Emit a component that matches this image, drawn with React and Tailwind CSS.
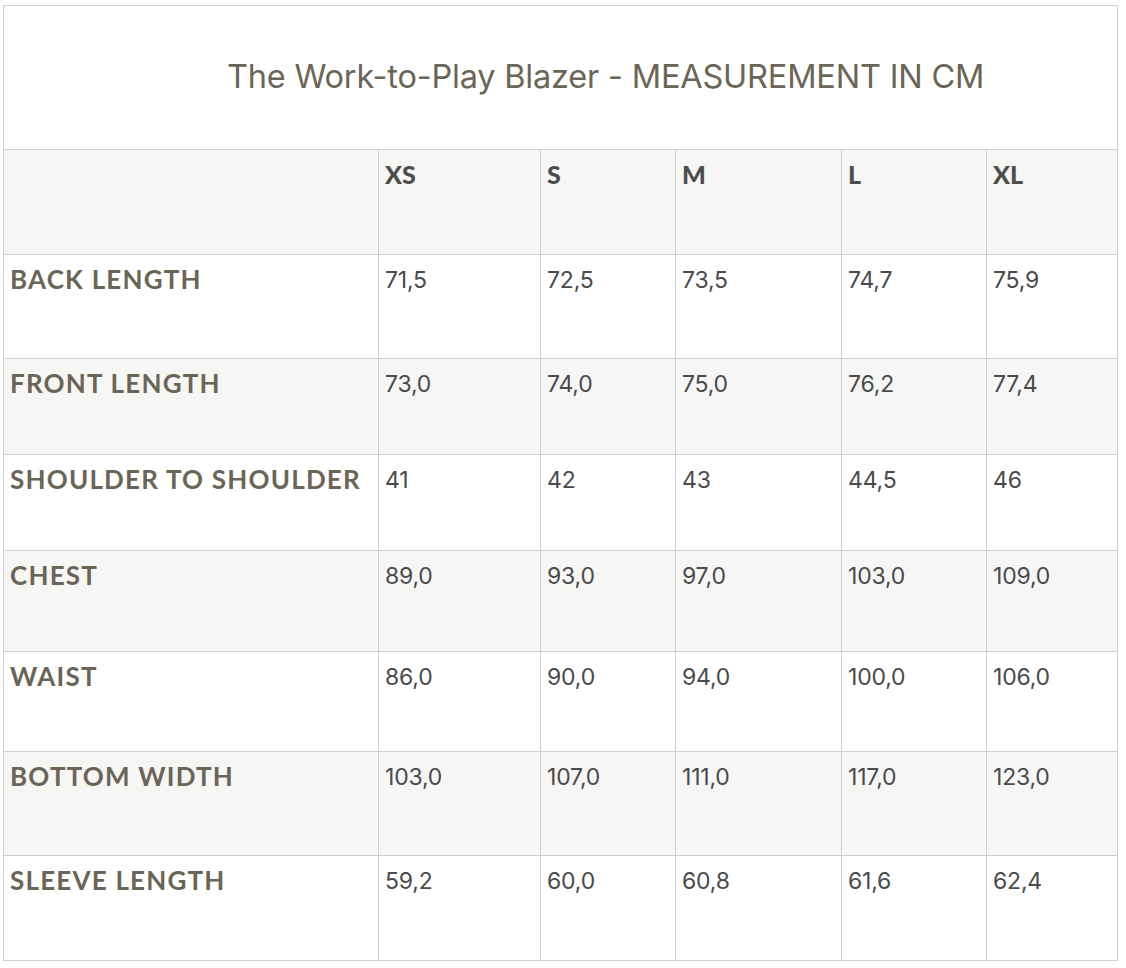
const sizes = ['XS', 'S', 'M', 'L', 'XL'];

const rows = [
  { label: 'BACK LENGTH', values: ['71,5', '72,5', '73,5', '74,7', '75,9'], h: 'h-[104px]' },
  { label: 'FRONT LENGTH', values: ['73,0', '74,0', '75,0', '76,2', '77,4'], h: 'h-[96px]' },
  { label: 'SHOULDER TO SHOULDER', values: ['41', '42', '43', '44,5', '46'], h: 'h-[96px]' },
  { label: 'CHEST', values: ['89,0', '93,0', '97,0', '103,0', '109,0'], h: 'h-[101px]' },
  { label: 'WAIST', values: ['86,0', '90,0', '94,0', '100,0', '106,0'], h: 'h-[100px]' },
  { label: 'BOTTOM WIDTH', values: ['103,0', '107,0', '111,0', '117,0', '123,0'], h: 'h-[104px]' },
  { label: 'SLEEVE LENGTH', values: ['59,2', '60,0', '60,8', '61,6', '62,4'], h: 'h-[105px]' },
];

export default function App() {
  return (
    <div className="min-h-screen bg-white pt-[5px] pl-[3px]">
      <table className="w-[1114px] border-collapse table-fixed border border-[#cfcfcf]">
        <colgroup>
          <col className="w-[375px]" />
          <col className="w-[162px]" />
          <col className="w-[135px]" />
          <col className="w-[166px]" />
          <col className="w-[145px]" />
          <col className="w-[131px]" />
        </colgroup>
        <thead>
          <tr className="h-[144px]">
            <th
              colSpan={6}
              className="border border-[#cfcfcf] bg-white pl-[90px] text-center align-middle font-normal text-[32.5px] text-[#6b6557] font-['Inter',sans-serif] tracking-[-0.2px]"
            >
              The Work-to-Play Blazer - MEASUREMENT IN CM
            </th>
          </tr>
          <tr className="h-[105px] bg-[#f6f6f5]">
            <th className="border border-[#cfcfcf]" />
            {sizes.map((s) => (
              <th
                key={s}
                className="border border-[#cfcfcf] px-[6px] pt-[6px] text-left align-top font-black text-[25px] text-[#4d4d4d] font-['Lato',sans-serif]"
              >
                {s}
              </th>
            ))}
          </tr>
        </thead>
        <tbody>
          {rows.map((r, i) => (
            <tr key={r.label} className={`${r.h} ${i % 2 === 1 ? 'bg-[#f6f6f5]' : 'bg-white'}`}>
              <td className="border border-[#cfcfcf] px-[6px] pt-[5px] align-top font-bold text-[26px] tracking-[1.2px] text-[#6b6557] font-['Lato',sans-serif] whitespace-nowrap">
                {r.label}
              </td>
              {r.values.map((v, j) => (
                <td
                  key={j}
                  className="border border-[#cfcfcf] px-[6px] pt-[8px] align-top text-[23px] text-[#4a4a4a] font-['Inter',sans-serif] tracking-[-0.2px]"
                >
                  {v}
                </td>
              ))}
            </tr>
          ))}
        </tbody>
      </table>
    </div>
  );
}
